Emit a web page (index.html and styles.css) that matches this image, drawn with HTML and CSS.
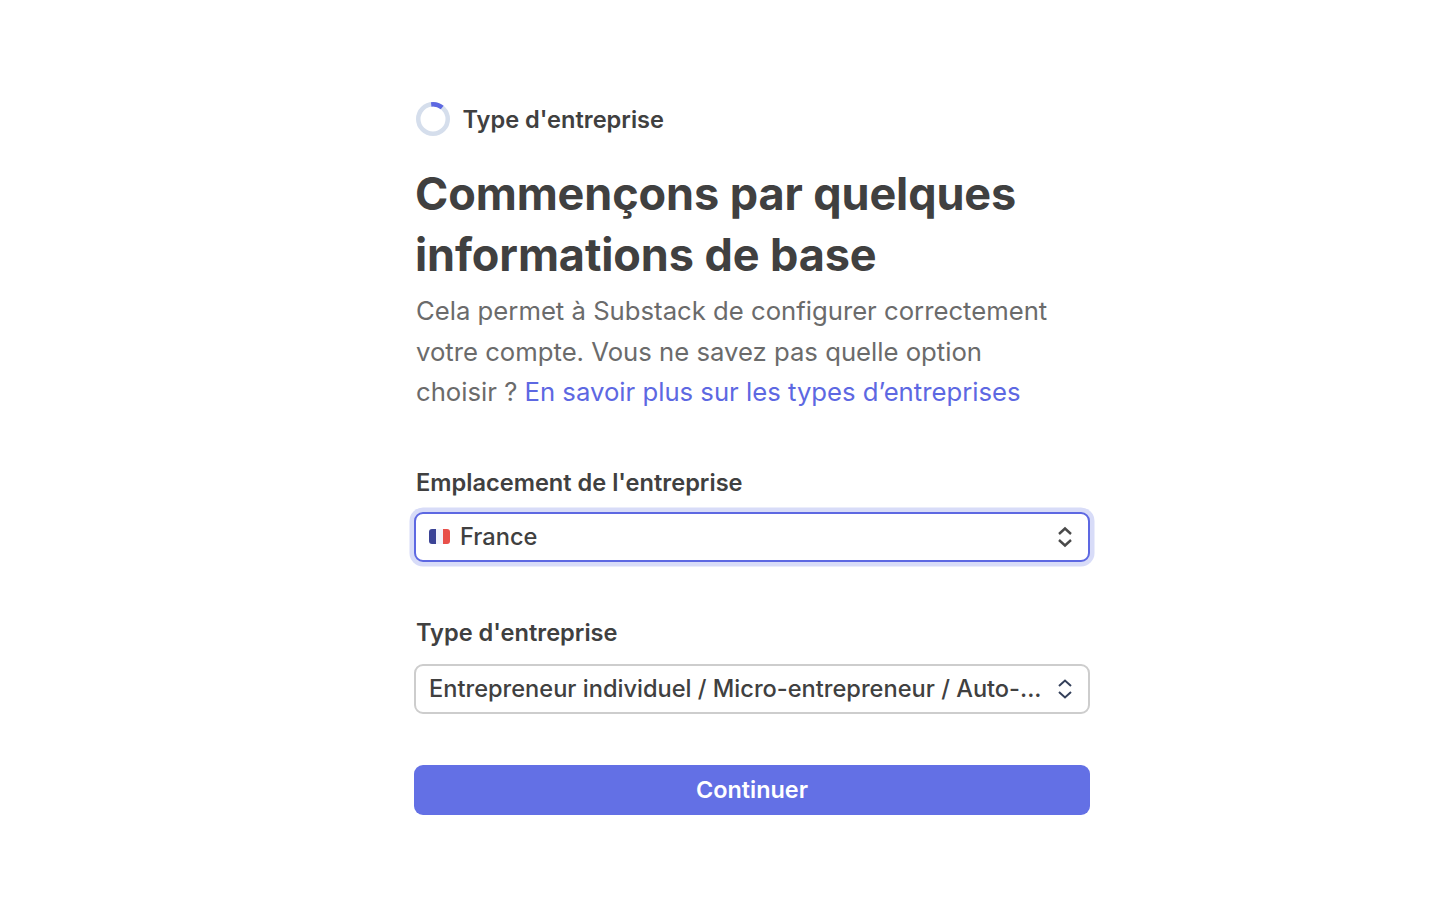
FILE: index.html
```html
<!DOCTYPE html>
<html>
<head>
    <meta charset="utf-8">
    <title>Type d'entreprise</title>
    <link rel="stylesheet" href="styles.css">
</head>
<body>
    <div class="container">
        <div class="step">
            <svg class="step-ring" width="34" height="34" viewBox="0 0 34 34">
                <circle cx="17" cy="17" r="14.75" fill="none" stroke="#d5deec" stroke-width="4.5"/>
                <path d="M15.2 2.4 A14.75 14.75 0 0 1 26.2 5.6" fill="none" stroke="#5d68e2" stroke-width="4.5"/>
            </svg>
            <span class="step-label">Type d'entreprise</span>
        </div>

        <h1 class="title">Commençons par quelques informations de base</h1>
        <p class="intro">Cela permet à Substack de configurer correctement votre compte. Vous ne savez pas quelle option choisir ? <a class="intro-link" href="#">En savoir plus sur les types d’entreprises</a></p>

        <div class="field field-location">
            <div class="field-label">Emplacement de l'entreprise</div>
            <div class="select select-focus">
                <svg class="flag" width="21" height="15" viewBox="0 0 21 15">
                    <defs><clipPath id="flag-clip"><rect width="21" height="15" rx="3"/></clipPath></defs>
                    <g clip-path="url(#flag-clip)">
                        <rect width="7" height="15" fill="#3b4395"/>
                        <rect x="7" width="7" height="15" fill="#f3f4fa"/>
                        <rect x="14" width="7" height="15" fill="#e8504a"/>
                    </g>
                </svg>
                <span class="select-value">France</span>
                <svg class="chevrons" width="18" height="22" viewBox="0 0 18 22">
                    <path d="M3 8 L9 2.5 L15 8 M3 14 L9 19.5 L15 14" fill="none" stroke="#4a4a4a" stroke-width="2.4"/>
                </svg>
            </div>
        </div>

        <div class="field field-type">
            <div class="field-label">Type d'entreprise</div>
            <div class="select">
                <span class="select-value">Entrepreneur individuel / Micro-entrepreneur / Auto-...</span>
                <svg class="chevrons" width="18" height="22" viewBox="0 0 18 22">
                    <path d="M3 8 L9 2.5 L15 8 M3 14 L9 19.5 L15 14" fill="none" stroke="#34405a" stroke-width="2"/>
                </svg>
            </div>
        </div>

        <button class="btn-continue">Continuer</button>
    </div>
</body>
</html>
```

FILE: styles.css
```css
body {
    margin: 0;
    background: white;
    font-family: Inter, "Liberation Sans", sans-serif;
    color: #404040;
}

.container {
    width: 676px;
    margin-left: 414px;
    padding-top: 102px;
}

.step {
    display: flex;
    align-items: center;
    gap: 13px;
    padding-left: 2px;
}

.step-ring {
    margin-left: -0.5px;
}

.step-label {
    font-size: 23.6px;
    font-weight: 600;
}

.title {
    margin: 27px 0 0 1px;
    font-size: 45px;
    line-height: 61px;
    font-weight: 700;
    letter-spacing: -0.1px;
    width: 660px;
}

.intro {
    margin: 6px 0 0 2px;
    font-size: 25.7px;
    line-height: 40.5px;
    color: #6b6b6b;
    width: 650px;
}

.intro-link {
    color: #5d68e2;
    text-decoration: none;
}

.field-label {
    font-size: 23.6px;
    font-weight: 600;
    line-height: 30px;
    padding-left: 2px;
    margin-bottom: 14px;
}

.field-location {
    margin-top: 55px;
}

.field-type {
    margin-top: 56px;
}

.field-type .field-label {
    margin-bottom: 16px;
}

.select {
    display: flex;
    align-items: center;
    height: 50px;
    box-sizing: border-box;
    padding: 0 13px;
    background: white;
    border: 2px solid #cdcdcd;
    border-radius: 9px;
    font-size: 23.6px;
    font-weight: 500;
}

.select-focus {
    border-color: #5d68e2;
    box-shadow: 0 0 0 4.5px #d8dcf8;
}

.flag {
    margin-right: 10px;
}

.select-value {
    flex: 1;
    white-space: nowrap;
}

.chevrons {
    flex: none;
    margin-right: 1px;
}

.btn-continue {
    display: block;
    width: 100%;
    height: 50px;
    margin-top: 51px;
    border: none;
    border-radius: 9px;
    background: #6370e5;
    color: white;
    font-family: inherit;
    font-size: 23.4px;
    font-weight: 600;
    cursor: pointer;
}
```
